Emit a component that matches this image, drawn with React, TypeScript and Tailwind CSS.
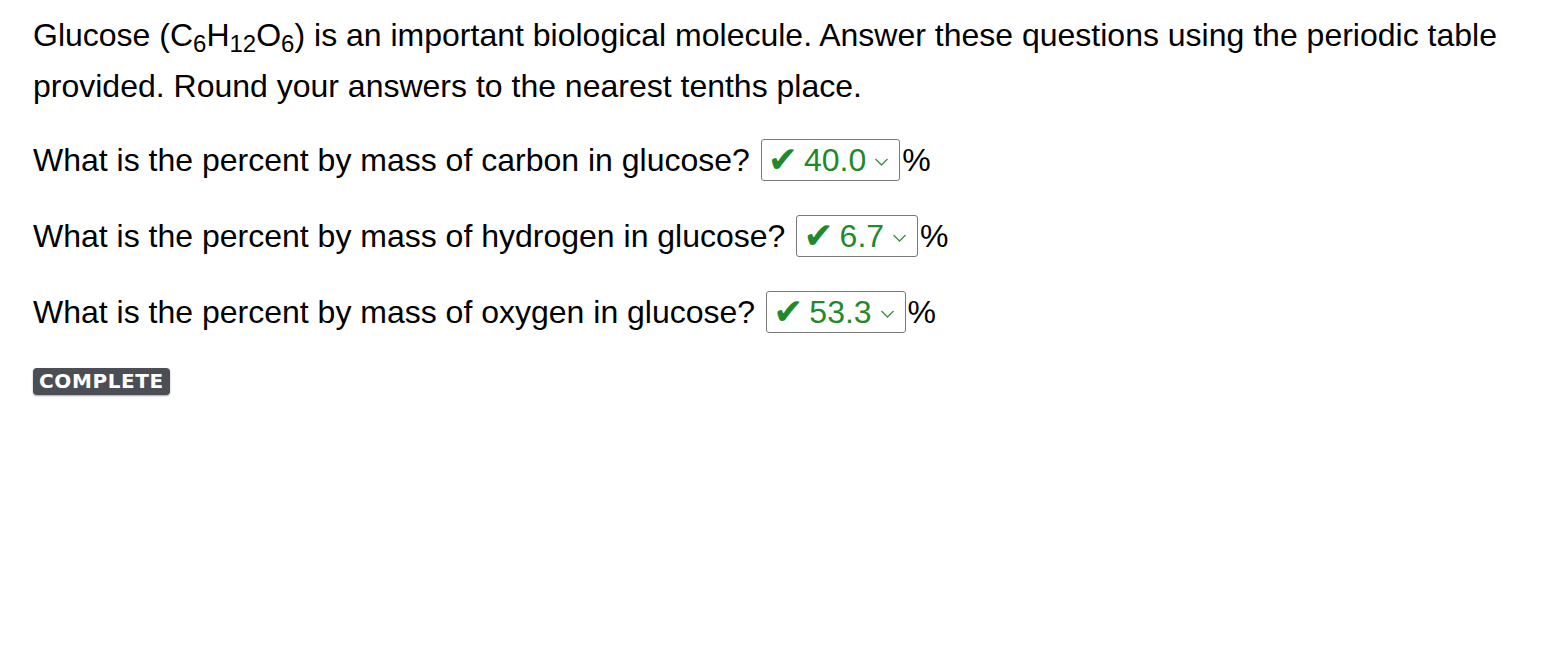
const ff = { fontFamily: '"Liberation Sans", Arial, sans-serif' };

function Answer({ value }: { value: string }) {
  return (
    <span className="inline-flex items-center h-[42px] pl-[6px] pr-[10px] border border-[#7a7a7a] rounded-[3px] ml-[11px] mr-[2px] text-[#1f8a2c]">
      <span className="text-[36px] leading-none mr-[6px] font-bold" style={{ fontFamily: '"DejaVu Sans", sans-serif' }}>✔</span>
      <span className="leading-none">{value}</span>
      <svg width="15" height="10" viewBox="0 0 15 10" className="ml-[8px] mt-[4px]">
        <path d="M1.5 2 L7.5 8 L13.5 2" fill="none" stroke="#3b8c4a" strokeWidth="1.3" />
      </svg>
    </span>
  );
}

export default function App() {
  const questions = [
    { label: "carbon", value: "40.0" },
    { label: "hydrogen", value: "6.7" },
    { label: "oxygen", value: "53.3" },
  ];
  return (
    <div className="bg-white w-[1564px] h-[672px] pl-[33px] pr-[40px] pt-[10px] text-black text-[32px]" style={ff}>
      <p className="leading-[51px]">
        Glucose (C<sub className="text-[24px] leading-none">6</sub>H<sub className="text-[24px] leading-none">12</sub>O
        <sub className="text-[24px] leading-none">6</sub>) is an important biological molecule. Answer these questions
        using the periodic table provided. Round your answers to the nearest tenths place.
      </p>
      <div className="mt-[27px] flex flex-col gap-[34px]">
        {questions.map((q) => (
          <div key={q.label} className="flex items-center h-[42px]">
            <span>What is the percent by mass of {q.label} in glucose?</span>
            <Answer value={q.value} />
            <span>%</span>
          </div>
        ))}
      </div>
      <div className="mt-[20px]">
        <span
          className="inline-block bg-[#4b4e54] text-white font-bold text-[20px] leading-[27px] px-[6px] rounded-[4px] tracking-[0.6px] shadow-[0_1px_2px_rgba(0,0,0,0.35)]"
          style={{ fontFamily: '"DejaVu Sans", sans-serif' }}
        >
          COMPLETE
        </span>
      </div>
    </div>
  );
}
